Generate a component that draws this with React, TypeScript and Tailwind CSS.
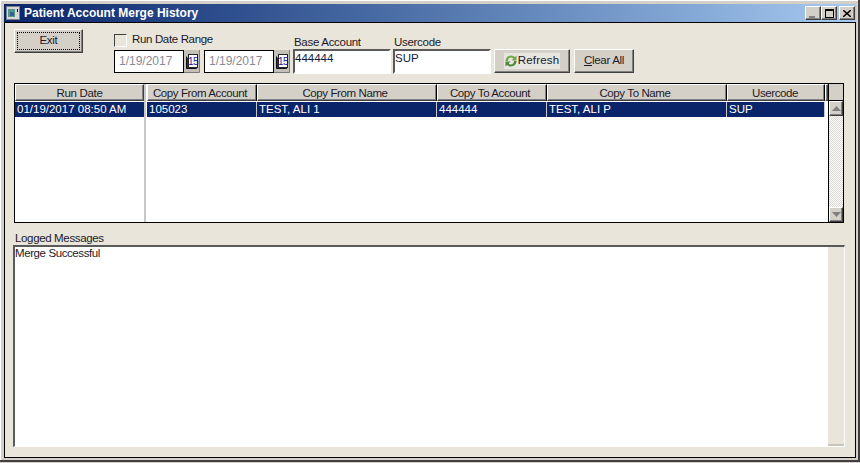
import React from "react";

const raised = "border border-t-white border-l-white border-r-[#404040] border-b-[#404040] shadow-[inset_-1px_-1px_0_#808080]";

function CalendarIcon() {
  return (
    <svg width="16" height="23" viewBox="0 0 16 23" className="block shrink-0">
      <rect x="0" y="0" width="16" height="23" fill="#c4c0b8" />
      <path d="M15.5 0v22.5H0" stroke="#7a7a7a" fill="none" />
      <path d="M2.5 6.5v12h10v-1" fill="#333" stroke="#111" />
      <rect x="4.5" y="4.5" width="9" height="13" fill="#fff" stroke="#222" />
      <text x="9" y="15" textAnchor="middle" fontSize="10" fill="#1a1a9a" fontFamily="'Liberation Sans',sans-serif" letterSpacing="-0.6">15</text>
    </svg>
  );
}

function DateBox() {
  return (
    <div className="flex h-[23px] w-[86px] border border-black bg-white">
      <div className="flex-1 pl-[4px] text-[12px] leading-[21px] text-[#8a8a96]">1/19/2017</div>
      <div className="-my-px -mr-px flex w-[17px] shrink-0 border-l border-black">
        <CalendarIcon />
      </div>
    </div>
  );
}

function Field({ label, value }: { label: string; value: string }) {
  return (
    <div className="flex w-[98px] flex-col">
      <div className="h-[13px] pl-[1px] text-[11.5px] leading-[13px] tracking-[-0.3px] text-[#1a1a2a]">{label}</div>
      <div className="h-[25px] border-2 border-t-[#5a5a5a] border-r-white border-b-white border-l-[#5a5a5a] bg-white text-[11.5px] leading-[14px] text-[#0f1a40]">{value}</div>
    </div>
  );
}

const columns = [
  { w: "w-[110px]", title: "Copy From Account", value: "105023", pad: "pr-[4px]" },
  { w: "w-[180px]", title: "Copy From Name", value: "TEST, ALI 1", pad: "pr-[4px]" },
  { w: "w-[110px]", title: "Copy To Account", value: "444444", pad: "pr-[4px]" },
  { w: "w-[180px]", title: "Copy To Name", value: "TEST, ALI P", pad: "pr-[4px]" },
  { w: "w-[98px]", title: "Usercode", value: "SUP", pad: "pr-[2px]" },
];

function ScrollButton({ up }: { up?: boolean }) {
  return (
    <div className={`flex h-[15px] w-[14px] shrink-0 items-center justify-center bg-[#d4d0c8] ${raised}`}>
      <svg width="9" height="5" viewBox="0 0 9 5">
        <path d={up ? "M4.5 0L9 5H0Z" : "M0 0H9L4.5 5Z"} fill="#808080" />
      </svg>
    </div>
  );
}

function WinButton({ children }: { children: React.ReactNode }) {
  return <div className={`flex h-[14px] w-[16px] items-center justify-center bg-[#d4d0c8] ${raised}`}>{children}</div>;
}

export default function App() {
  return (
    <div className="h-[463px] w-[860px] overflow-hidden bg-[#d4d0c8] font-['Liberation_Sans',Arial,sans-serif]">
      <div className="flex h-[462px] w-[860px] flex-col border-r-2 border-b-2 border-r-[#404040] border-b-[#404040] pt-[4px] pr-[2px] pb-[2px] pl-[4px] shadow-[inset_1px_1px_0_#fff]">
        {/* Title bar */}
        <div className="flex h-[18px] shrink-0 items-center bg-gradient-to-r from-[#0a246a] to-[#a6caf0] pr-[1px] pl-[2px]">
          <svg width="14" height="14" viewBox="0 0 14 14" className="mr-[4px] shrink-0">
            <rect x="0" y="0" width="14" height="14" fill="#d8d8d8" />
            <rect x="0.5" y="0.5" width="13" height="13" fill="none" stroke="#7a8088" />
            <rect x="2" y="3" width="7" height="8" fill="#4f9a8a" />
            <rect x="4" y="6" width="4" height="4" fill="#3a5f90" />
            <rect x="11" y="3" width="1" height="3" fill="#111" />
          </svg>
          <span className="text-[12px] font-bold text-white">Patient Account Merge History</span>
          <div className="ml-auto flex">
            <WinButton>
              <span className="mt-[8px] mr-[2px] block h-[2px] w-[6px] bg-[#808080]" />
            </WinButton>
            <WinButton>
              <span className="block h-[9px] w-[9px] border border-t-2 border-black" />
            </WinButton>
            <div className="ml-[2px]">
              <WinButton>
                <svg width="8" height="7" viewBox="0 0 8 7">
                  <path d="M0 0L8 7M8 0L0 7" stroke="#000" strokeWidth="1.5" />
                </svg>
              </WinButton>
            </div>
          </div>
        </div>

        {/* Client */}
        <div className="flex flex-1 flex-col border border-black bg-[#e9e5da] pr-[9px] pl-[8px]">
          {/* Toolbar */}
          <div className="flex h-[60px] shrink-0 pl-[1px]">
            <button className={`mt-[6px] flex h-[24px] w-[69px] items-center justify-center bg-[#d4d0c8] text-[11.5px] tracking-[-0.3px] text-[#1a1a2a] ${raised}`}>
              <span className="flex h-[18px] w-[63px] items-center justify-center border border-dotted border-black">Exit</span>
            </button>
            <div className="ml-[31px] flex flex-col">
              <div className="mt-[11px] flex h-[12px] items-center">
                <span className="h-[13px] w-[13px] border border-t-[#404040] border-r-white border-b-white border-l-[#404040] bg-[#e9e5da]" />
                <span className="ml-[5px] text-[11.5px] tracking-[-0.35px] text-[#1a1a2a]">Run Date Range</span>
              </div>
              <div className="mt-[4px] flex gap-[4px]">
                <DateBox />
                <DateBox />
              </div>
            </div>
            <div className="mt-[13px] ml-[3px] flex gap-[2px]">
              <Field label="Base Account" value="444444" />
              <Field label="Usercode" value="SUP" />
            </div>
            <div className="mt-[26px] ml-[3px] flex h-[24px] gap-[4px]">
              <button className={`flex w-[76px] items-center justify-center bg-[#d4d0c8] ${raised}`}>
                <span className="flex h-[16px] items-center bg-[#e8e6e0] pr-[1px]">
                  <svg width="14" height="14" viewBox="0 0 14 14">
                    <path d="M1.5 7a5.5 5.5 0 0 1 9.4-3.9L12.5 1.5v5H7.5L9.3 4.7A3 3 0 0 0 4 7Z" fill="#6fa84a" />
                    <path d="M12.5 7a5.5 5.5 0 0 1-9.4 3.9L1.5 12.5v-5h5L4.7 9.3A3 3 0 0 0 10 7Z" fill="#4f8a3a" />
                  </svg>
                  <span className="text-[11.5px] tracking-[0.2px] text-[#1a1a2a]">Refresh</span>
                </span>
              </button>
              <button className={`w-[60px] bg-[#d4d0c8] text-[11.5px] tracking-[-0.3px] text-[#1a1a2a] ${raised}`}>
                <span className="underline">C</span>lear All
              </button>
            </div>
          </div>

          {/* Grid */}
          <div className="ml-[1px] flex h-[140px] w-[830px] shrink-0 border border-black bg-white">
            <div className="flex w-[131px] shrink-0 flex-col border-r-2 border-r-[#c8c8c8]">
              <div className={`h-[17px] bg-[#d4d0c8] text-center text-[11.5px] leading-[16px] tracking-[-0.3px] text-[#1a1a2a] ${raised}`}>Run Date</div>
              <div className="mt-[1px] h-[15px] bg-[#0a246a] pl-[2px] text-[11.5px] leading-[14px] text-white">01/19/2017 08:50 AM</div>
            </div>
            <div className="ml-[1px] flex min-w-0 flex-1 flex-col">
              <div className="flex h-[17px] shrink-0">
                {columns.map((c) => (
                  <div key={c.title} className={`${c.w} ${c.pad} h-[17px] shrink-0 border border-t-white border-r-black border-b-[#404040] border-l-white bg-[#d4d0c8] text-center text-[11.5px] leading-[16px] tracking-[-0.4px] text-[#1a1a2a] shadow-[inset_-1px_-1px_0_#808080]`}>
                    {c.title}
                  </div>
                ))}
                <div className={`h-[17px] w-[3px] bg-[#d4d0c8] ${raised}`} />
              </div>
              <div className="mt-[1px] flex h-[15px]">
                {columns.map((c) => (
                  <div key={c.title} className={`${c.w} shrink-0 border-r border-r-[#c8c8c8] bg-[#0a246a] pl-[2px] text-[11.5px] leading-[14px] text-white`}>
                    {c.value}
                  </div>
                ))}
              </div>
            </div>
            <div className="flex w-[15px] shrink-0 flex-col border-l border-black">
              <div className="h-[17px] shrink-0 border-b border-black bg-[#d4d0c8]" />
              <ScrollButton up />
              <div className="flex-1 bg-[repeating-conic-gradient(#dcd8d0_0_25%,#fff_0_50%)] bg-[length:2px_2px]" />
              <ScrollButton />
            </div>
          </div>

          {/* Logged messages */}
          <div className="mt-[9px] h-[13px] shrink-0 pl-[2px] text-[11.5px] leading-[13px] tracking-[-0.35px] text-[#1a1a2a]">Logged Messages</div>
          <div className="flex h-[202px] w-[832px] shrink-0 border-t-2 border-r border-b border-l-2 border-t-[#5a5a5a] border-r-white border-b-white border-l-[#5a5a5a] bg-white">
            <div className="flex-1 text-[11.5px] leading-[13px] tracking-[-0.4px] text-[#1a1a2a]">Merge Successful</div>
            <div className="w-[16px] shrink-0 border-b-2 border-b-[#c8c4b8] bg-[#e9e5da]" />
          </div>
        </div>
      </div>
    </div>
  );
}
